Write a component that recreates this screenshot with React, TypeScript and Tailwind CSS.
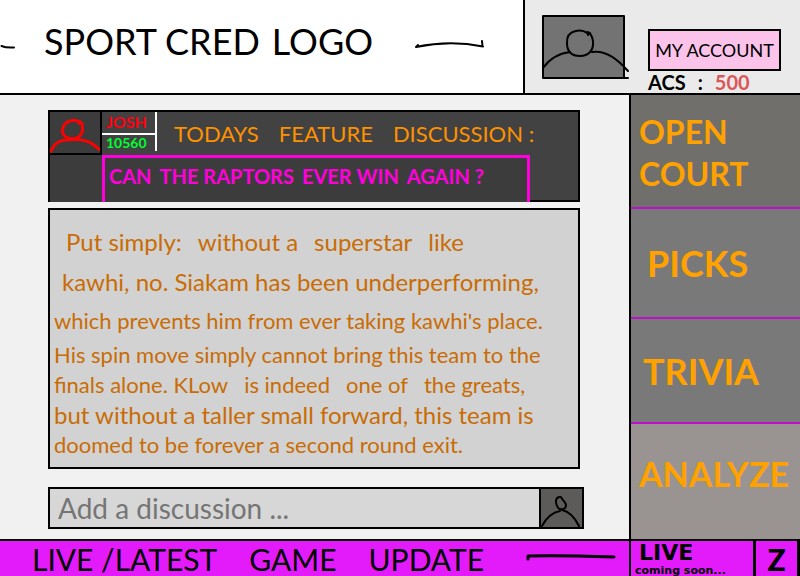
const avatarStroke = { fill: "none", strokeLinecap: "round", strokeLinejoin: "round" } as const;

function Dash({ className, d, viewBox, width }: { className: string; d: string; viewBox: string; width: number }) {
  return (
    <svg className={className} viewBox={viewBox} stroke="#000" strokeWidth={width} aria-hidden="true" {...avatarStroke}>
      <path d={d} />
    </svg>
  );
}

function Header() {
  return (
    <header className="flex h-[95px] shrink-0 border-b-2 border-black">
      <div className="flex min-w-0 flex-1 items-center border-r-2 border-black bg-white pb-3">
        <Dash className="h-4 w-4 shrink-0" viewBox="0 0 16 16" width={2} d="M1.500 13 Q6 15 14 14.500" />
        <h1 className="ml-7 flex gap-3 text-[36px] leading-none whitespace-nowrap">
          <span>SPORT CRED</span> <span>LOGO</span>
        </h1>
        <Dash className="mr-[37px] ml-auto h-4 w-[72px] shrink-0" viewBox="0 0 72 16" width={2} d="M2 14 L4 12 M2 14 Q36 7 69 13.500 M68.500 13.500 L68 8" />
      </div>
      <div className="flex w-[275px] shrink-0 bg-[#eaeaea] pt-[14px] pl-4">
        <svg className="h-[66px] w-[88px] shrink-0" viewBox="0 0 88 66" stroke="#000" strokeWidth="2" role="img" aria-label="Profile" {...avatarStroke}>
          <path fill="#737373" d="M2 2 H83 V64 H2 Z" />
          <path d="M83 64 H87" />
          <path d="M46 19 C41 15 25 15 26 29 C26 38 31 42 39 42 C47 42 53 37 52 27 C51 22 49 18 46 18 L47 21 L49 19" />
          <path d="M2 54 Q12 40 29 38 M51 38 Q68 35 87 57" />
        </svg>
        <div className="ml-[19px] pt-[15px]">
          <button className="block h-[42px] w-[133px] border-2 border-black bg-[#fbc3ea] text-lg leading-none whitespace-nowrap">
            MY ACCOUNT
          </button>
          <p className="flex gap-3 text-xl leading-[22px] font-bold">
            <span>ACS</span> <span>:</span> <span className="text-[#db5757]">500</span>
          </p>
        </div>
      </div>
    </header>
  );
}

function FeatureBanner() {
  return (
    <section className="grid h-[92px] grid-cols-[52px_minmax(0,1fr)] border-2 border-black bg-[#424242]">
      <div className="border-r-2 border-b-2 border-black bg-[#3c3c3c]">
        <svg className="h-[41px] w-full" viewBox="0 0 52 41" stroke="#ff0000" strokeWidth="3" role="img" aria-label="Josh" {...avatarStroke}>
          <path d="M31 10 C27 6 14 7 13 18 C12 24 19 27 24 27 C31 27 36 20 33 11 L31 9 L30 11" />
          <path d="M1 40 Q6 27 22 28 Q40 26 51 38" />
        </svg>
      </div>
      <div className="flex">
        <div className="mb-1 w-[55px] border-r-2 border-white font-bold">
          <p className="h-[23px] border-b-2 border-white px-1 text-base leading-5 text-[#ff0010]">JOSH</p>
          <p className="px-1 text-sm leading-4 text-[#00ff30]">10560</p>
        </div>
        <h2 className="ml-[17px] flex items-center gap-5 text-[22px] whitespace-nowrap text-[#ff9100]">
          <span>TODAYS</span> <span>FEATURE</span> <span>DISCUSSION :</span>
        </h2>
      </div>
      <div className="h-[47px] bg-[#3c3c3c]" />
      <div className="mr-12 h-[47px] border-3 border-b-0 border-[#ff00dc] bg-[#3c3c3c] pl-1">
        <h3 className="flex gap-2 text-xl leading-9 font-bold whitespace-nowrap text-[#ff00dc]">
          <span>CAN</span> <span>THE RAPTORS</span> <span>EVER WIN</span> <span>AGAIN ?</span>
        </h3>
      </div>
    </section>
  );
}

function Main() {
  return (
    <main className="flex min-w-0 flex-1 flex-col pt-[15px] pr-[49px] pb-[10px] pl-12">
      <FeatureBanner />
      <article className="mt-[6px] min-h-[261px] flex-1 border-2 border-black bg-[#d2d2d2] px-1 pt-3 text-[22px] whitespace-nowrap text-[#c96c04]">
        <p className="pl-2 text-2xl leading-10">
          <span className="flex gap-4 pl-1">
            <span>Put simply:</span> <span>without a</span> <span>superstar</span> <span>like</span>
          </span>
          <span className="block">kawhi, no. Siakam has been underperforming,</span>
        </p>
        <p className="leading-[38px]">which prevents him from ever taking kawhi's place.</p>
        <p className="leading-[30px]">
          <span className="block">His spin move simply cannot bring this team to the</span>
          <span className="flex gap-4">
            <span>finals alone. KLow</span> <span>is indeed</span> <span>one of</span> <span>the greats,</span>
          </span>
          <span className="block text-2xl leading-[30px]">but without a taller small forward, this team is</span>
          <span className="block">doomed to be forever a second round exit.</span>
        </p>
      </article>
      <form className="mt-[18px] -mr-1 flex h-[42px] shrink-0 border-2 border-black">
        <input
          aria-label="Add a discussion"
          placeholder="Add a discussion ..."
          className="min-w-0 flex-1 bg-[#d7d7d7] px-2 text-[28px] outline-none placeholder:text-[#757575]"
        />
        <button type="button" aria-label="Post" className="w-[43px] border-l-2 border-black bg-[#5d5b59]">
          <svg className="h-full w-full" viewBox="0 0 41 38" stroke="#000" strokeWidth="2" {...avatarStroke}>
            <path d="M19 8 C15 8 14 12 16 17 C18 22 25 21 25 16 C25 13 21 11 20 8" />
            <path d="M1 37 Q8 24 19 22 M21 21 Q31 23 38 37" />
          </svg>
        </button>
      </form>
    </main>
  );
}

function Sidebar() {
  return (
    <nav className="grid w-[171px] shrink-0 grid-rows-[114px_110px_105px_1fr] border-l-2 border-black text-[36px] font-bold text-[#ffa200]">
      <a href="#open-court" className="border-b-2 border-[#bd0fce] bg-[#716f6b] pt-4 pl-2 text-[32px] leading-[42px]">
        OPEN<br />COURT
      </a>
      <a href="#picks" className="flex items-center border-b-2 border-[#bd0fce] bg-[#797979] pl-4">PICKS</a>
      <a href="#trivia" className="flex items-center border-b-2 border-[#bd0fce] bg-[#797979] pl-3">TRIVIA</a>
      <a href="#analyze" className="flex items-center bg-[#999392] pb-4 pl-2 text-[34px]">ANALYZE</a>
    </nav>
  );
}

function Footer() {
  return (
    <footer className="flex h-[38px] shrink-0 border-t-2 border-black bg-[#e31bfb]">
      <div className="flex min-w-0 flex-1 items-center gap-8 pl-8 text-[30px] leading-9 whitespace-nowrap">
        <span>LIVE /LATEST</span> <span>GAME</span> <span>UPDATE</span>
        <Dash className="mr-[13px] ml-auto h-4 w-[90px] shrink-0" viewBox="0 0 90 16" width={3} d="M2 8 V5 Q30 4 88 6" />
      </div>
      <div className="w-[124px] shrink-0 border-l-2 border-black pl-1 font-['DejaVu_Sans'] font-bold whitespace-nowrap">
        <p className="pl-1 text-[22px] leading-[23px]">LIVE</p>
        <p className="text-[11px] leading-[13px]">coming soon...</p>
      </div>
      <button aria-label="Z" className="w-[47px] shrink-0 border-x-3 border-black text-[30px] leading-9 font-black">Z</button>
    </footer>
  );
}

export default function App() {
  return (
    <div className="flex min-h-screen flex-col bg-[#f1f1f1] font-[Lato,sans-serif] text-black">
      <Header />
      <div className="flex flex-1">
        <Main />
        <Sidebar />
      </div>
      <Footer />
    </div>
  );
}
